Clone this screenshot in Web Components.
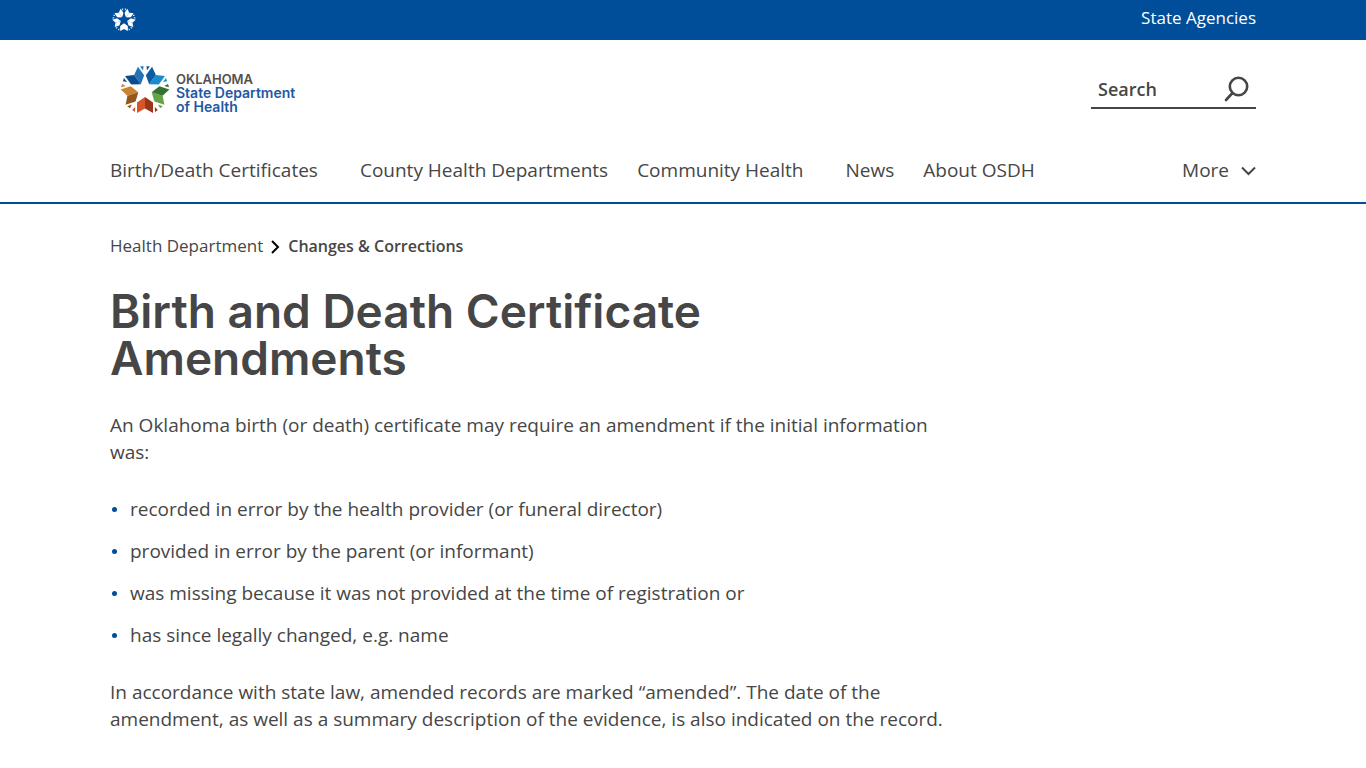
<!DOCTYPE html>
<html lang="en">
<head>
<meta charset="utf-8">
<meta name="viewport" content="width=device-width, initial-scale=1">
<title>Birth and Death Certificate Amendments</title>
<style>
  body { margin: 0; background: #fff; color: #464646; font: 19px/27px "Open Sans", "Noto Sans", sans-serif; }
</style>
</head>
<body>
<osdh-page></osdh-page>
<script>
const define = (name, html) => {
  const template = document.createElement("template");
  template.innerHTML = html;
  customElements.define(name, class extends HTMLElement {
    constructor() {
      super();
      this.attachShadow({ mode: "open" }).append(template.content.cloneNode(true));
    }
  });
};

/* Five folded leaves around a star, with small flecks beside each leaf. */
const leaf = (angle, light, dark) => `
  <g transform="rotate(${angle})">
    <path fill="${light}" d="M0 7L-8 12.500V23L0 18.500Z"/>
    <path fill="${dark}" d="M0 7L8 12.500V23L0 18.500Z"/>
    <path fill="${light}" d="M-9.800 17L-12.800 20L-10 22Z"/>
    <path fill="${dark}" d="M9.800 17L12.800 20L10 22Z"/>
  </g>`;
const star = (size, colors) => `
  <svg width="${size}" height="${size}" viewBox="-25 -25 50 50" aria-hidden="true">
    ${colors.map(([light, dark], i) => leaf(i * 72, light, dark)).join("")}
    <path fill="none" stroke="var(--gap, #fff)" stroke-width="1.500" d="${[0, 1, 2, 3, 4].map(i => {
      const a = (i * 72 - 90) * Math.PI / 180;
      return `M${Math.cos(a) * 10} ${Math.sin(a) * 10}L${Math.cos(a) * 24} ${Math.sin(a) * 24}`;
    }).join("")}"/>
  </svg>`;

define("page-wrap", `
  <style>
    :host { display: block; max-width: 1146px; margin: 0 auto; }
  </style>
  <slot></slot>`);

define("state-bar", `
  <style>
    :host { display: block; background: #004e9a; color: #fff; font-size: 17px; line-height: 24px; }
    .row { display: flex; align-items: center; justify-content: space-between; height: 40px; }
    a { color: inherit; text-decoration: none; }
    .home { display: flex; padding-left: 2px; --gap: #004e9a; }
    .agencies { padding-bottom: 4px; }
  </style>
  <page-wrap><div class="row">
    <a class="home" href="#" aria-label="Oklahoma">${star(24, Array(5).fill(["#fff", "#fff"]))}</a>
    <a class="agencies" href="#">State Agencies</a>
  </div></page-wrap>`);

define("health-logo", `
  <style>
    :host { display: block; }
    a { display: flex; align-items: center; gap: 6px; color: #1d59a4; text-decoration: none;
        font: 600 14px/14px Inter, "Open Sans", sans-serif; }
    svg { display: block; }
    .name { padding-top: 6px; }
    span { display: block; }
    .state { color: #55504d; font-size: 13px; }
  </style>
  <a href="#">
    ${star(50, [["#d4572a", "#9b3518"], ["#c98334", "#955719"], ["#2174b8", "#0b4d8c"], ["#1a8ccb", "#0c5ca4"], ["#65a346", "#357230"]])}
    <span class="name"><span class="state">OKLAHOMA</span><span>State Department</span><span>of Health</span></span>
  </a>`);

define("search-box", `
  <style>
    :host { display: block; }
    form { display: flex; align-items: center; justify-content: space-between; box-sizing: border-box;
           width: 165px; height: 38px; padding: 0 7px; border-bottom: 2px solid #464646; }
    input { width: 100px; min-width: 0; padding: 0; border: 0; outline: 0; background: none;
            color: #464646; font: 600 18px/27px "Open Sans", sans-serif; }
    input::placeholder { color: #464646; opacity: 1; }
    button { display: flex; padding: 0; border: 0; background: none; color: #464646; }
  </style>
  <form role="search">
    <input type="text" aria-label="Search" placeholder="Search">
    <button type="button" aria-label="Submit search">
      <svg width="25" height="26" viewBox="0 0 25 26" fill="none" stroke="currentColor" stroke-width="2.600" stroke-linecap="round">
        <circle cx="14.500" cy="10.500" r="8.700"/><path d="M8.500 17L2 24"/>
      </svg>
    </button>
  </form>`);

define("main-nav", `
  <style>
    :host { display: block; }
    nav, ul { display: flex; }
    nav { justify-content: space-between; }
    ul { gap: 29px; margin: 0; padding: 0; list-style: none; }
    a { color: inherit; text-decoration: none; }
    .menu { padding-right: 13px; }
    button { display: flex; align-items: center; gap: 12px; padding: 0; border: 0; background: none;
             color: inherit; font: inherit; }
  </style>
  <nav aria-label="Main">
    <ul>
      <li class="menu"><a href="#">Birth/Death Certificates</a></li>
      <li><a href="#">County Health Departments</a></li>
      <li class="menu"><a href="#">Community Health</a></li>
      <li><a href="#">News</a></li>
      <li><a href="#">About OSDH</a></li>
    </ul>
    <button type="button">More
      <svg width="15" height="10" viewBox="0 0 15 10" fill="none" stroke="currentColor" stroke-width="2"><path d="M1 1.500L7.500 8L14 1.500"/></svg>
    </button>
  </nav>`);

define("site-header", `
  <style>
    :host { display: block; border-bottom: 2px solid #004e9a; }
    .top { display: flex; justify-content: space-between; align-items: center; padding: 25px 0 42px 10px; }
    main-nav { padding-bottom: 18px; }
  </style>
  <page-wrap>
    <div class="top"><health-logo></health-logo><search-box></search-box></div>
    <main-nav></main-nav>
  </page-wrap>`);

define("bread-crumbs", `
  <style>
    :host { display: block; font-size: 17px; line-height: 24px; }
    nav { display: flex; align-items: center; gap: 8px; }
    a { color: inherit; text-decoration: none; }
    svg { padding-top: 2px; }
    b { font-size: 16px; font-weight: 600; }
  </style>
  <nav aria-label="Breadcrumb">
    <a href="#">Health Department</a>
    <svg width="9" height="14" viewBox="0 0 9 14" fill="none" stroke="#000" stroke-width="2"><path d="M1 1L7 7L1 13"/></svg>
    <b aria-current="page">Changes &amp; Corrections</b>
  </nav>`);

define("article-body", `
  <style>
    :host { display: block; max-width: 848px; }
    h1 { max-width: 640px; margin: 0 0 30px; font: 600 46px/47px Inter, "Open Sans", sans-serif; }
    p { margin: 0; }
    ul { display: grid; gap: 15px; margin: 30px 0; padding: 0; list-style: none; }
    li { display: flex; align-items: center; gap: 13px; }
    li::before { content: ""; width: 5px; height: 5px; margin-left: 2px; border-radius: 50%; background: #004e9a; }
  </style>
  <h1>Birth and Death Certificate Amendments</h1>
  <p>An Oklahoma birth (or death) certificate may require an amendment if the initial information was:</p>
  <ul>
    <li>recorded in error by the health provider (or funeral director)</li>
    <li>provided in error by the parent (or informant)</li>
    <li>was missing because it was not provided at the time of registration or</li>
    <li>has since legally changed, e.g. name</li>
  </ul>
  <p>In accordance with state law, amended records are marked “amended”. The date of the amendment, as well as a summary description of the evidence, is also indicated on the record.</p>`);

define("osdh-page", `
  <style>
    :host { display: block; }
    main { padding: 30px 0; }
    article-body { margin-top: 30px; }
  </style>
  <state-bar></state-bar>
  <site-header></site-header>
  <main><page-wrap>
    <bread-crumbs></bread-crumbs>
    <article-body></article-body>
  </page-wrap></main>`);
</script>
</body>
</html>
